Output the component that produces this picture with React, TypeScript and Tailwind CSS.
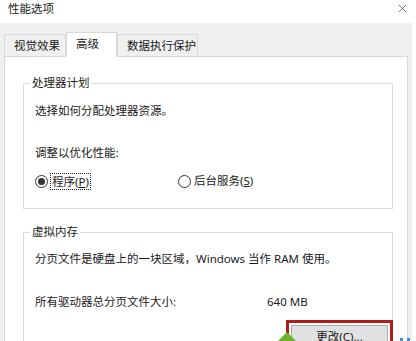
import { X } from 'lucide-react';

const tabs = [
    { name: '视觉效果', w: 'w-[62px]', active: false },
    { name: '高级', w: 'w-[51px]', active: true },
    { name: '数据执行保护', w: 'w-[81px]', active: false },
];

function Radio({ checked }: { checked: boolean }) {
    return (
        <span className="flex items-center justify-center w-[13px] h-[13px] rounded-full border border-[#333] bg-white shrink-0">
            {checked && <span className="w-[7px] h-[7px] rounded-full bg-[#333]" />}
        </span>
    );
}

export default function App() {
    return (
        <div className="relative w-[416px] h-[341px] overflow-hidden bg-white text-[#1a1a1a] text-[11.5px] leading-[16px] font-['Noto_Sans','Noto_Sans_CJK_SC',sans-serif]">
            {/* Title bar */}
            <div className="h-[23px] flex items-center justify-between pl-[8px] pr-[7px]">
                <span className="text-[11.5px] -mt-[6px]">性能选项</span>
                <X size={13} strokeWidth={1.2} className="-mt-[6px] text-[#333]" />
            </div>

            {/* Tab strip + panel */}
            <div className="w-[412px] h-[318px] bg-[#f0f0f0] pl-[4px] pr-[4px] pt-[9px]">
                <div className="flex items-end h-[24px]">
                    {tabs.map((tab) =>
                        tab.active ? (
                            <div
                                key={tab.name}
                                className={`${tab.w} h-[25px] -mb-px relative z-10 bg-white border border-[#d9d9d9] border-b-white flex items-center pl-[9px] pb-[2px]`}
                            >
                                {tab.name}
                            </div>
                        ) : (
                            <div
                                key={tab.name}
                                className={`${tab.w} h-[22px] bg-[#f0f0f0] border border-[#d9d9d9] border-b-0 flex items-center pl-[9px]`}
                            >
                                {tab.name}
                            </div>
                        )
                    )}
                </div>

                <div className="h-[300px] bg-white border border-[#d9d9d9] pl-[18px] pr-[14px] pt-[18px]">
                    {/* 处理器计划 */}
                    <fieldset className="border border-[#dcdcdc] px-[11px] pb-[18px]">
                        <legend className="-ml-[5px] px-[2px]">处理器计划</legend>
                        <div className="mt-[12px]">选择如何分配处理器资源。</div>
                        <div className="mt-[26px]">调整以优化性能:</div>
                        <div className="mt-[11px] flex items-center h-[18px]">
                            <div className="flex items-center w-[143px]">
                                <Radio checked />
                                <span className="ml-[2px] border border-dotted border-[#222] px-[1px] leading-[15px]">
                                    程序(<u>P</u>)
                                </span>
                            </div>
                            <div className="flex items-center">
                                <Radio checked={false} />
                                <span className="ml-[2px] px-[1px]">
                                    后台服务(<u>S</u>)
                                </span>
                            </div>
                        </div>
                    </fieldset>

                    {/* 虚拟内存 */}
                    <fieldset className="mt-[15px] border border-[#dcdcdc] px-[11px] pb-[20px]">
                        <legend className="-ml-[5px] px-[2px]">虚拟内存</legend>
                        <div className="mt-[11px]">分页文件是硬盘上的一块区域，Windows 当作 RAM 使用。</div>
                        <div className="mt-[27px] flex">
                            <span className="w-[232px]">所有驱动器总分页文件大小:</span>
                            <span>640 MB</span>
                        </div>
                        <div className="mt-[10px] flex justify-end -mr-[12px]">
                            <div className="border-[3px] border-[#b01c1c] p-[2px]">
                                <div className="w-[97px] h-[24px] bg-[#e1e1e1] border border-[#adadad] flex items-center justify-center">
                                    更改(<u>C</u>)...
                                </div>
                            </div>
                        </div>
                    </fieldset>
                </div>
            </div>

            {/* annotation arrow */}
            <svg className="absolute left-[277px] top-[332px]" width="20" height="12" viewBox="0 0 20 12">
                <polygon points="10,0 20,10 20,12 0,12 0,10" fill="#6cb42a" />
            </svg>
            <div className="absolute left-[400px] top-[338px] flex gap-[4px]">
                <span className="w-[3px] h-[3px] bg-[#3b8fd8]" />
                <span className="w-[3px] h-[3px] bg-[#3b8fd8]" />
            </div>
        </div>
    );
}
